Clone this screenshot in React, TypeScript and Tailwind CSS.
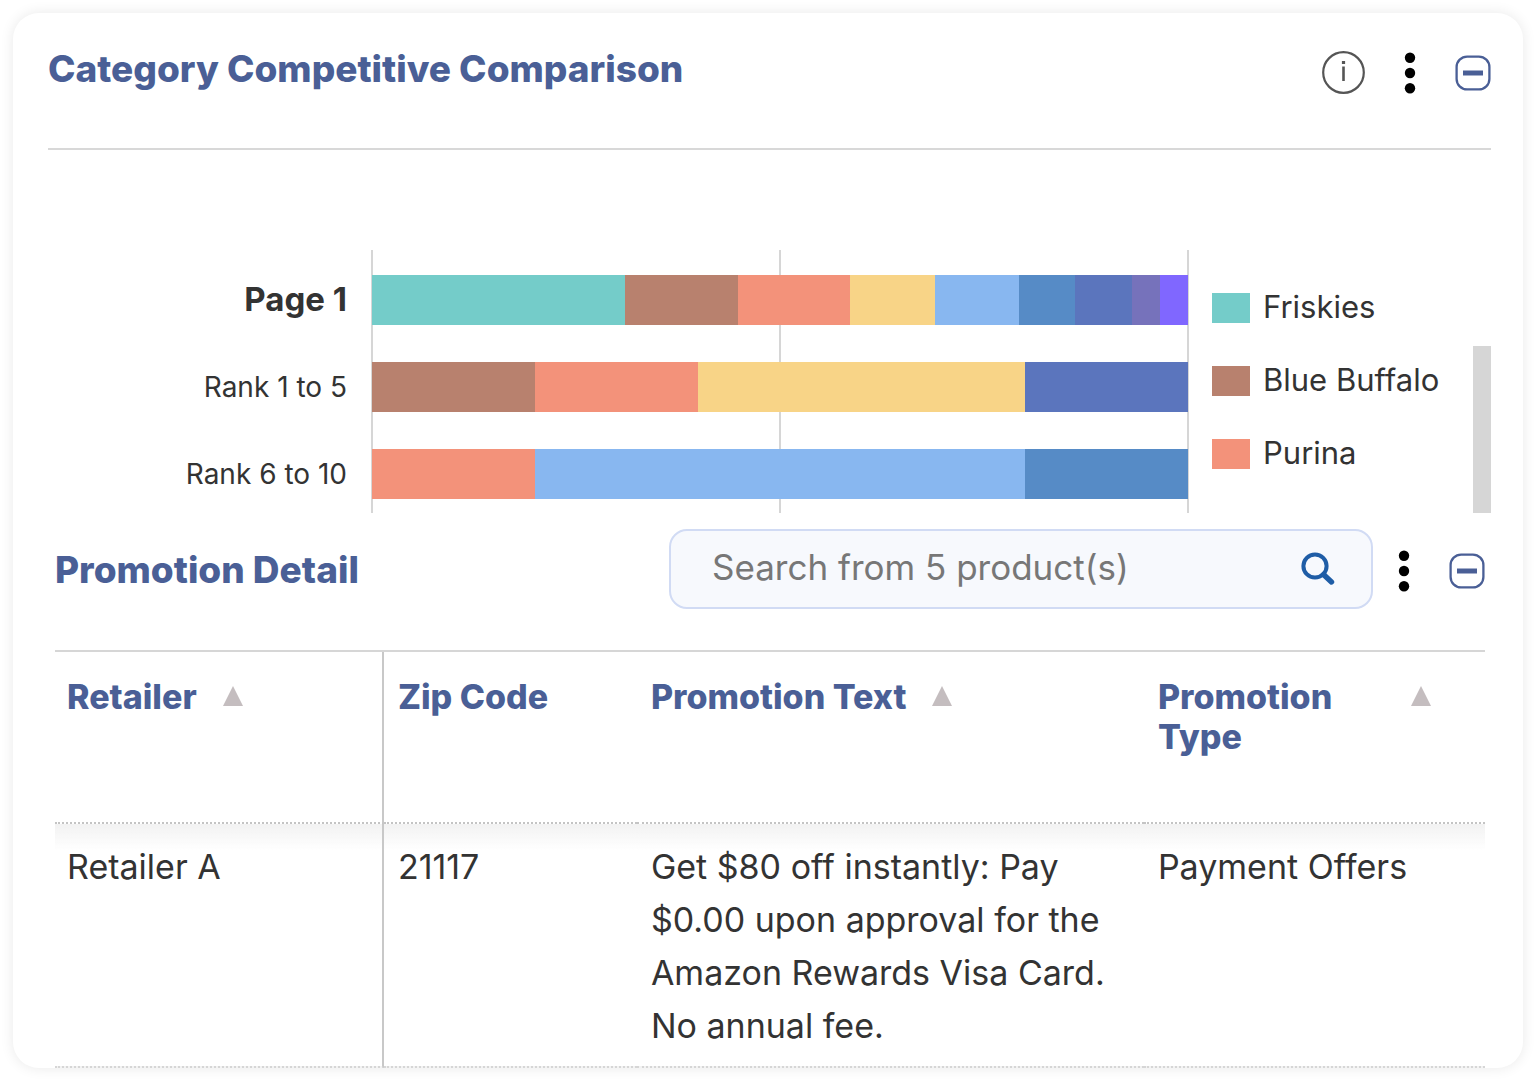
type Segment = { color: string; value: number };

const rows: { label: string; strong?: boolean; segments: Segment[] }[] = [
  {
    label: "Page 1",
    strong: true,
    segments: [
      { color: "bg-[#74ccc9]", value: 9 },
      { color: "bg-[#b8816e]", value: 4 },
      { color: "bg-[#f3927a]", value: 4 },
      { color: "bg-[#f8d487]", value: 3 },
      { color: "bg-[#88b7f0]", value: 3 },
      { color: "bg-[#568bc6]", value: 2 },
      { color: "bg-[#5b75bd]", value: 2 },
      { color: "bg-[#7672bb]", value: 1 },
      { color: "bg-[#8067ff]", value: 1 },
    ],
  },
  {
    label: "Rank 1 to 5",
    segments: [
      { color: "bg-[#b8816e]", value: 1 },
      { color: "bg-[#f3927a]", value: 1 },
      { color: "bg-[#f8d487]", value: 2 },
      { color: "bg-[#5b75bd]", value: 1 },
    ],
  },
  {
    label: "Rank 6 to 10",
    segments: [
      { color: "bg-[#f3927a]", value: 1 },
      { color: "bg-[#88b7f0]", value: 3 },
      { color: "bg-[#568bc6]", value: 1 },
    ],
  },
];

const legend = [
  { name: "Friskies", color: "bg-[#74ccc9]" },
  { name: "Blue Buffalo", color: "bg-[#b8816e]" },
  { name: "Purina", color: "bg-[#f3927a]" },
];

function InfoIcon() {
  return (
    <svg width="43" height="43" viewBox="0 0 43 43" fill="none" stroke="#555" aria-hidden="true">
      <circle cx="21.5" cy="21.5" r="20.3" strokeWidth="2.2" />
      <path d="M21.5 15.5V30" strokeWidth="2.6" />
      <path d="M21.5 10V13" strokeWidth="3.2" />
    </svg>
  );
}

function DotsIcon() {
  return (
    <svg width="12" height="42" viewBox="0 0 12 42" fill="#000" aria-hidden="true">
      <circle cx="6" cy="5.8" r="5.2" />
      <circle cx="6" cy="21" r="5.2" />
      <circle cx="6" cy="36.2" r="5.2" />
    </svg>
  );
}

function MinusIcon() {
  return (
    <svg width="36" height="36" viewBox="0 0 36 36" fill="none" stroke="#4a5f96" aria-hidden="true">
      <rect x="1.6" y="1.6" width="32.8" height="32.8" rx="10.5" strokeWidth="2.3" />
      <path d="M8 18H28" strokeWidth="5" />
    </svg>
  );
}

function SearchIcon() {
  return (
    <svg width="34" height="34" viewBox="0 0 34 34" fill="none" stroke="#1f5da6" aria-hidden="true">
      <circle cx="14" cy="14" r="11.6" strokeWidth="4" />
      <path d="M22.5 22.5L30.5 30" strokeWidth="5.4" strokeLinecap="round" />
    </svg>
  );
}

function SortButton({ column }: { column: string }) {
  return (
    <button type="button" aria-label={`Sort by ${column}`} className="mt-[9px] shrink-0">
      <svg width="20" height="20" viewBox="0 0 20 20" fill="#c4bdbf" aria-hidden="true">
        <path d="M10 0L20 20H0Z" />
      </svg>
    </button>
  );
}

export default function App() {
  const th = "border-b-2 border-dotted border-[#c4c4c4] pt-[25px] pl-3.5 text-left align-top h-[172px] font-extrabold";
  const td =
    "border-b-2 border-dotted border-[#d6d6d6] pt-4 pb-3.5 pl-3.5 align-top bg-linear-to-b from-[#f2f2f2] to-transparent to-[26px]";

  return (
    <div className="p-[13px] font-['Inter',sans-serif] text-[#333]">
      <main className="rounded-[26px] bg-white pr-8 pl-[35px] shadow-[0_0_14px_rgba(0,0,0,0.09)]">
        <section>
          <header className="flex items-start justify-between border-b-2 border-[#d8d8d8] pt-[38px] pb-[54px]">
            <h2 className="text-[37px] leading-9 font-extrabold text-[#4a5f96]">Category Competitive Comparison</h2>
            <div className="flex items-center gap-[39px]">
              <button type="button" aria-label="Information"><InfoIcon /></button>
              <button type="button" aria-label="More options"><DotsIcon /></button>
              <button type="button" aria-label="Collapse"><MinusIcon /></button>
            </div>
          </header>

          <div className="mt-[100px] flex h-[263px] overflow-hidden">
            <div className="flex w-[299px] flex-col gap-[37px] pt-[25px] text-right">
              {rows.map((row) => (
                <div
                  key={row.label}
                  className={
                    row.strong
                      ? "h-[50px] text-[33px] leading-[48px] font-bold"
                      : "h-[50px] text-[28px] leading-[50px]"
                  }
                >
                  {row.label}
                </div>
              ))}
            </div>
            <div className="relative ml-[25px] flex-1">
              <div className="absolute inset-y-0 -left-px -right-px flex justify-between">
                <span className="w-0.5 bg-[#d6d6d6]" />
                <span className="w-0.5 bg-[#d6d6d6]" />
                <span className="w-0.5 bg-[#d6d6d6]" />
              </div>
              <div className="relative flex flex-col gap-[37px] pt-[25px]">
                {rows.map((row) => (
                  <div key={row.label} className="flex h-[50px]">
                    {row.segments.map((segment) => (
                      <div key={segment.color} className={segment.color} style={{ flexGrow: segment.value }} />
                    ))}
                  </div>
                ))}
              </div>
            </div>
            <ul className="ml-6 w-[261px] pt-[21px]">
              {legend.map((item) => (
                <li key={item.name} className="flex h-[73px] items-center gap-[13px] text-[31px] leading-9">
                  <span className={`h-[30px] w-[38px] ${item.color}`} />
                  <span className="pb-0.5">{item.name}</span>
                </li>
              ))}
            </ul>
            <div className="flex w-[18px] flex-col justify-end">
              <div className="h-[167px] bg-[#d6d6d6]" />
            </div>
          </div>
        </section>

        <section className="mr-1.5 ml-[7px] pt-4">
          <header className="flex items-center border-b-2 border-[#d6d6d6] pb-[41px]">
            <h2 className="flex-1 pt-0.5 text-[37px] leading-10 font-extrabold text-[#4a5f96]">Promotion Detail</h2>
            <form
              role="search"
              className="flex h-20 w-[704px] items-center rounded-[18px] border-2 border-[#d1dbf4] bg-[#f7f9fd] pr-9 pl-[41px]"
            >
              <input
                type="search"
                aria-label="Search products"
                placeholder="Search from 5 product(s)"
                className="min-w-0 flex-1 bg-transparent pb-1 text-[35px] leading-10 outline-none placeholder:text-[#777]"
              />
              <button type="submit" aria-label="Search"><SearchIcon /></button>
            </form>
            <div className="ml-[25px] flex items-center gap-[39px] pt-1">
              <button type="button" aria-label="More options"><DotsIcon /></button>
              <button type="button" aria-label="Collapse"><MinusIcon /></button>
            </div>
          </header>

          <table className="w-full table-fixed border-separate border-spacing-0 text-[34px]">
            <colgroup>
              <col className="w-[23%]" />
              <col className="w-[253px]" />
              <col className="w-[507px]" />
              <col />
            </colgroup>
            <thead className="leading-10 text-[#4a5f96]">
              <tr>
                <th scope="col" className="h-[172px] border-r-2 border-b-2 border-r-[#c8c8c8] border-b-[#c4c4c4] pt-[25px] pl-3 text-left align-top font-extrabold [border-bottom-style:dotted]">
                  <div className="flex items-start gap-[26px]">Retailer <SortButton column="Retailer" /></div>
                </th>
                <th scope="col" className={th}>Zip Code</th>
                <th scope="col" className={th}>
                  <div className="flex items-start gap-[26px]">Promotion Text <SortButton column="Promotion Text" /></div>
                </th>
                <th scope="col" className={th}>
                  <div className="flex items-start justify-between pr-[54px]">
                    <span className="w-[200px]">Promotion Type</span>
                    <SortButton column="Promotion Type" />
                  </div>
                </th>
              </tr>
            </thead>
            <tbody className="leading-[53px]">
              <tr>
                <td className="border-r-2 border-b-2 border-r-[#c8c8c8] border-b-[#d6d6d6] bg-linear-to-b from-[#f2f2f2] to-transparent to-[26px] pt-4 pb-3.5 pl-3 align-top [border-bottom-style:dotted]">
                  Retailer A
                </td>
                <td className={td}>21117</td>
                <td className={td}>Get $80 off instantly: Pay $0.00 upon approval for the Amazon Rewards Visa Card. No annual fee.</td>
                <td className={td}>Payment Offers</td>
              </tr>
            </tbody>
          </table>
        </section>
      </main>
    </div>
  );
}
